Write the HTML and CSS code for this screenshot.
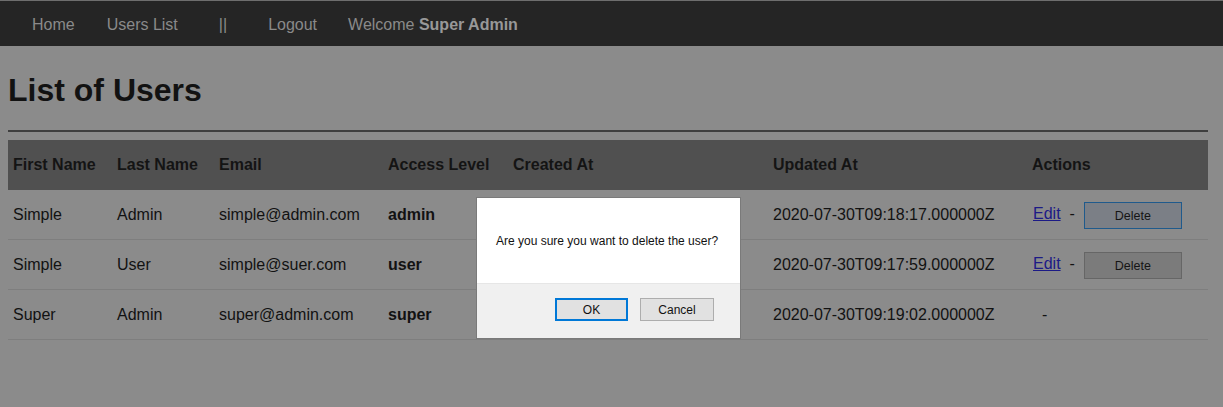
FILE: index.html
```html
<!DOCTYPE html>
<html>
<head>
<meta charset="utf-8">
<title>List of Users</title>
<link rel="stylesheet" href="styles.css">
</head>
<body>
<nav class="navbar">
  <a class="nav-item nav-home" href="#">Home</a>
  <a class="nav-item nav-users" href="#">Users List</a>
  <span class="nav-item nav-sep">||</span>
  <a class="nav-item nav-logout" href="#">Logout</a>
  <span class="nav-item nav-welcome">Welcome <b>Super Admin</b></span>
</nav>
<main class="content">
  <h1 class="title">List of Users</h1>
  <hr class="rule">
  <table class="users">
    <thead>
      <tr>
        <th class="c-first">First Name</th>
        <th class="c-last">Last Name</th>
        <th class="c-email">Email</th>
        <th class="c-level">Access Level</th>
        <th class="c-created">Created At</th>
        <th class="c-updated">Updated At</th>
        <th class="c-actions">Actions</th>
      </tr>
    </thead>
    <tbody>
      <tr>
        <td>Simple</td><td>Admin</td><td>simple@admin.com</td><td><b>admin</b></td>
        <td>2020-07-30T09:18:17.000000Z</td><td>2020-07-30T09:18:17.000000Z</td>
        <td><a class="edit" href="#">Edit</a><span class="dash">-</span><button class="del del-focus">Delete</button></td>
      </tr>
      <tr>
        <td>Simple</td><td>User</td><td>simple@suer.com</td><td><b>user</b></td>
        <td>2020-07-30T09:17:59.000000Z</td><td>2020-07-30T09:17:59.000000Z</td>
        <td><a class="edit" href="#">Edit</a><span class="dash">-</span><button class="del">Delete</button></td>
      </tr>
      <tr>
        <td>Super</td><td>Admin</td><td>super@admin.com</td><td><b>super</b></td>
        <td class="covered">2020-07-30T09:19:02.000000Z</td><td>2020-07-30T09:19:02.000000Z</td>
        <td><span class="dash dash-only">-</span></td>
      </tr>
    </tbody>
  </table>
</main>
<div class="dialog">
  <div class="dialog-body">Are you sure you want to delete the user?</div>
  <div class="dialog-foot">
    <button class="dbtn dbtn-ok">OK</button>
    <button class="dbtn dbtn-cancel">Cancel</button>
  </div>
</div>
</body>
</html>
```
FILE: styles.css
```css
html, body {
  margin: 0;
  padding: 0;
}
body {
  background: #8b8b8b;
  font-family: "Liberation Sans", Arial, sans-serif;
  font-size: 16px;
  color: #111;
  width: 1223px;
  height: 407px;
  overflow: hidden;
  position: relative;
}
.navbar {
  display: flex;
  align-items: center;
  height: 46px;
  background: #252525;
  border-top: 1px solid #6e6e6e;
  box-sizing: border-box;
  padding-left: 32px;
  padding-top: 3px;
}
.nav-item {
  color: #8a8a8a;
  text-decoration: none;
  font-size: 16px;
}
.nav-users { margin-left: 32px; }
.nav-sep { margin-left: 41px; }
.nav-logout { margin-left: 41px; }
.nav-welcome { margin-left: 31px; }
.nav-welcome b { color: #989898; }

.content {
  width: 1200px;
  padding: 0 8px;
}
.title {
  margin: 26px 0 0;
  font-size: 32px;
  font-weight: bold;
  color: #121212;
  line-height: 37px;
}
.rule {
  margin: 21px 0 0;
  border: 0;
  height: 2px;
  background: #3e3e3e;
}
.users {
  margin-top: 8px;
  width: 100%;
  border-collapse: collapse;
  table-layout: fixed;
}
.users th {
  background: #505050;
  height: 50px;
  text-align: left;
  font-weight: bold;
  color: #141414;
  padding: 0 5px;
}
.users td {
  height: 49px;
  border-bottom: 1px solid #7e7e7e;
  padding: 0 5px;
  color: #121212;
}
.c-first { width: 94px; }
.c-last { width: 92px; }
.c-email { width: 159px; }
.c-level { width: 115px; }
.c-created { width: 250px; }
.c-updated { width: 249px; }
.edit {
  color: #1c1a86;
  text-decoration: underline;
  margin-left: 1px;
}
.dash {
  display: inline-block;
  margin: 0 9px 0 9px;
}
.dash-only {
  margin-left: 10px;
}
.del {
  width: 98px;
  height: 27px;
  font-family: "Liberation Sans", Arial, sans-serif;
  font-size: 12.5px;
  color: #151515;
  background: #7b7b7b;
  border: 1px solid #666;
  vertical-align: middle;
  padding: 0;
  margin-top: 2px;
}
.del-focus {
  background: #7b7f86;
  border-color: #1f5a8c;
}

.dialog {
  position: absolute;
  left: 476px;
  top: 197px;
  width: 265px;
  height: 142px;
  background: #fff;
  border: 1px solid #7a7a7a;
  box-sizing: border-box;
  display: flex;
  flex-direction: column;
  font-family: "Liberation Sans", Arial, sans-serif;
}
.dialog-body {
  height: 85px;
  box-sizing: border-box;
  padding: 36px 0 0 19px;
  font-size: 12px;
  color: #111;
}
.dialog-foot {
  flex: 1;
  background: #f0f0f0;
  border-top: 1px solid #e6e6e6;
  display: flex;
  justify-content: flex-end;
  align-items: flex-start;
  padding: 14px 26px 0 0;
  gap: 12px;
}
.dbtn {
  height: 23px;
  font-family: "Liberation Sans", Arial, sans-serif;
  font-size: 12px;
  color: #111;
  background: #e1e1e1;
  border: 1px solid #adadad;
  padding: 0;
}
.dbtn-ok {
  width: 73px;
  border: 2px solid #0078d7;
}
.dbtn-cancel {
  width: 74px;
}
```
